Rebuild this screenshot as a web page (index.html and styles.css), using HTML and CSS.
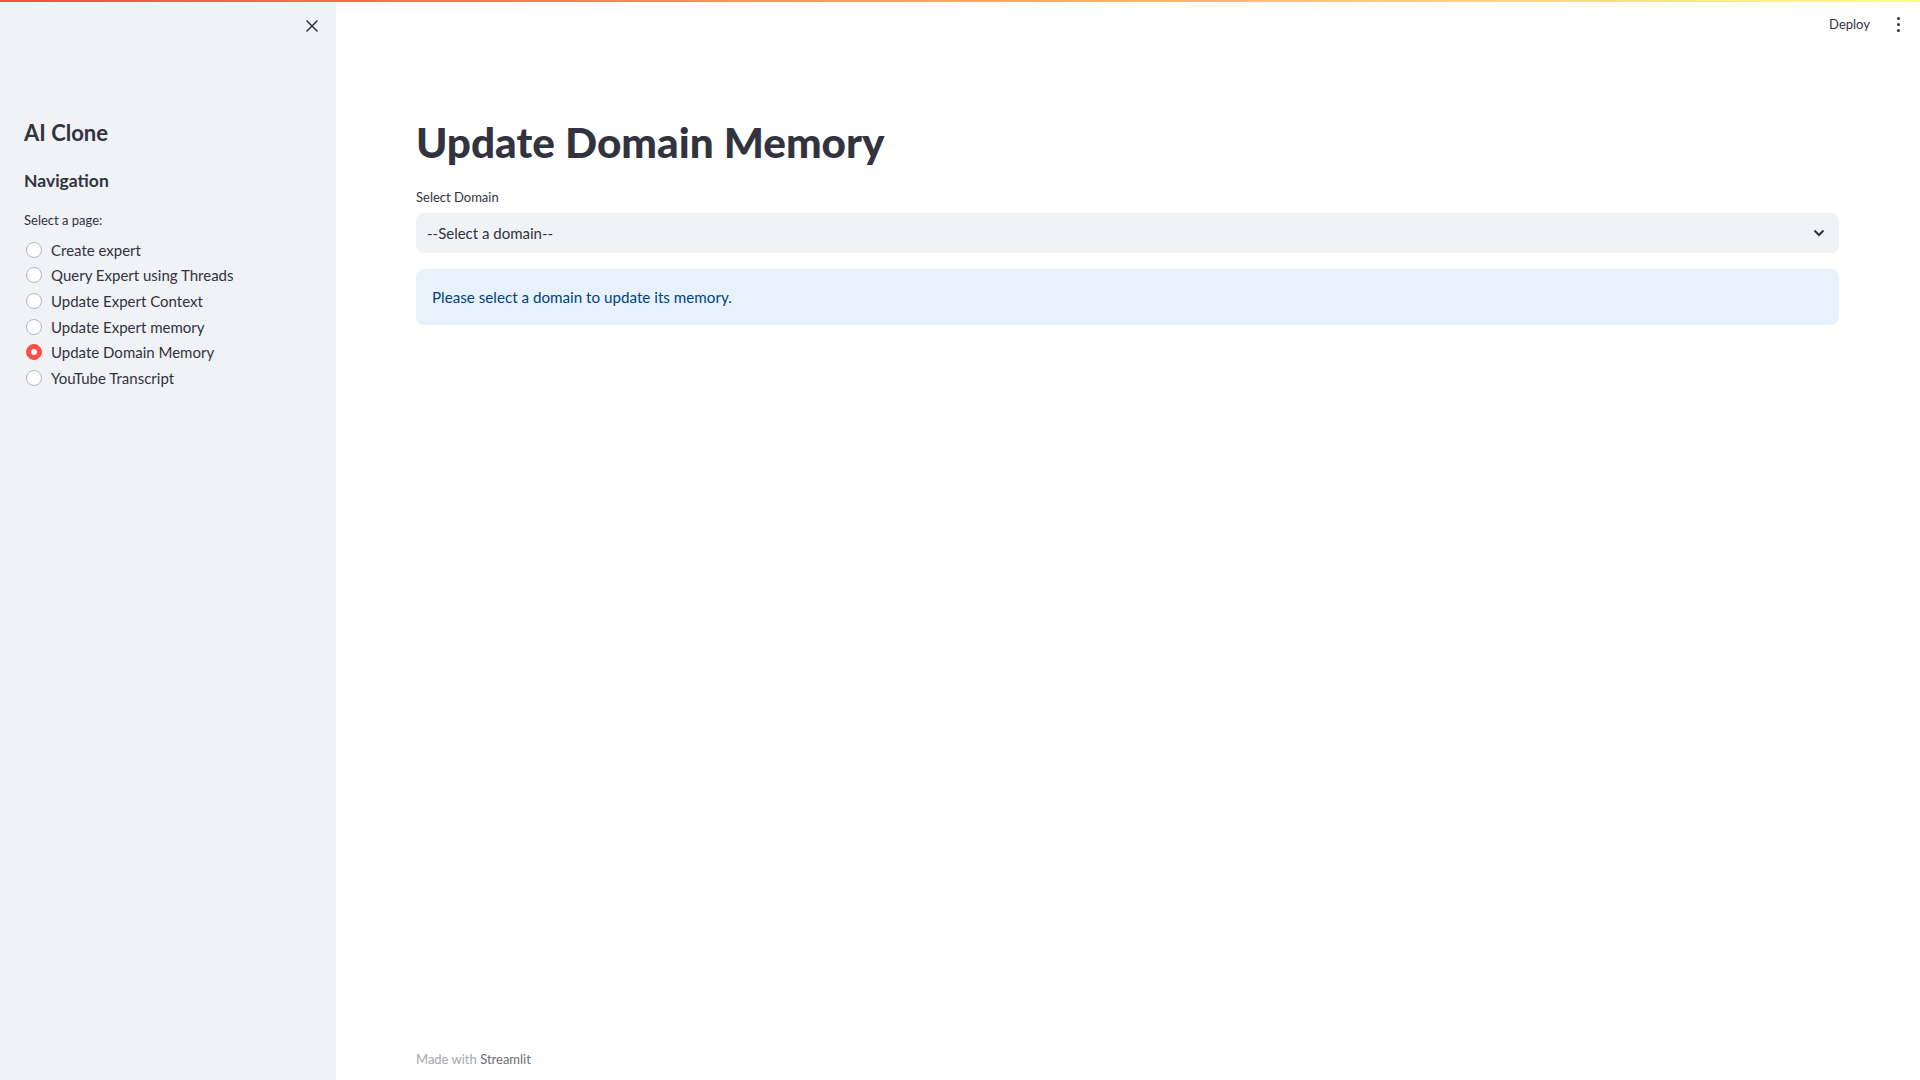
FILE: index.html
```html
<!DOCTYPE html>
<html lang="en">
<head>
<meta charset="utf-8">
<title>Update Domain Memory</title>
<link rel="stylesheet" href="styles.css">
</head>
<body>
<div class="decoration"></div>
<div class="app">
  <aside class="sidebar">
    <div class="sidebar-top">
      <button class="close-btn" aria-label="Close sidebar">
        <svg width="14" height="14" viewBox="0 0 14 14"><path d="M1.5 1.5 L12.5 12.5 M12.5 1.5 L1.5 12.5" stroke="#31333f" stroke-width="1.5" fill="none"/></svg>
      </button>
    </div>
    <h1 class="side-title">AI Clone</h1>
    <h2 class="side-sub">Navigation</h2>
    <div class="radio-label">Select a page:</div>
    <ul class="radio-list">
      <li class="radio-item"><span class="radio"></span><span>Create expert</span></li>
      <li class="radio-item"><span class="radio"></span><span>Query Expert using Threads</span></li>
      <li class="radio-item"><span class="radio"></span><span>Update Expert Context</span></li>
      <li class="radio-item"><span class="radio"></span><span>Update Expert memory</span></li>
      <li class="radio-item"><span class="radio checked"></span><span>Update Domain Memory</span></li>
      <li class="radio-item"><span class="radio"></span><span>YouTube Transcript</span></li>
    </ul>
  </aside>
  <main class="main">
    <header class="topbar">
      <span class="deploy">Deploy</span>
      <span class="menu" aria-label="Main menu"><i></i><i></i><i></i></span>
    </header>
    <h1 class="title">Update Domain Memory</h1>
    <div class="field-label">Select Domain</div>
    <div class="select">
      <span>--Select a domain--</span>
      <svg class="chev" width="12" height="8" viewBox="0 0 12 8"><path d="M1.5 1.5 L6 6 L10.5 1.5" stroke="#31333f" stroke-width="2" fill="none"/></svg>
    </div>
    <div class="info">Please select a domain to update its memory.</div>
    <footer class="footer">Made with <span class="brand">Streamlit</span></footer>
  </main>
</div>
</body>
</html>
```
FILE: styles.css
```css
* { box-sizing: border-box; }
html, body { margin: 0; padding: 0; height: 100%; }
body {
  font-family: "Lato", "Noto Sans", sans-serif;
  color: #31333f;
  background: #ffffff;
}
.decoration {
  position: absolute;
  top: 0; left: 0; right: 0;
  height: 2px;
  background: linear-gradient(90deg, #ff4b4b, #fffd80);
  z-index: 10;
}
.app { display: flex; height: 1080px; }
.sidebar {
  width: 336px;
  flex: none;
  background: #f0f2f6;
  padding: 0 24px;
}
.sidebar-top {
  height: 52px;
  display: flex;
  align-items: center;
  justify-content: flex-end;
  margin-right: -12px;
}
.close-btn {
  border: 0; background: none; padding: 0;
  width: 24px; height: 24px;
  display: flex; align-items: center; justify-content: center;
}
.side-title {
  margin: 67px 0 0;
  font-size: 22px;
  line-height: 28px;
  font-weight: 700;
}
.side-sub {
  margin: 22px 0 0;
  font-size: 17.5px;
  line-height: 24px;
  font-weight: 700;
}
.radio-label {
  margin-top: 17px;
  font-size: 13px;
  line-height: 20px;
}
.radio-list {
  list-style: none;
  margin: 7px 0 0;
  padding: 0;
}
.radio-item {
  height: 25.6px;
  display: flex;
  align-items: center;
  font-size: 15px;
}
.radio {
  width: 16px; height: 16px;
  border-radius: 50%;
  border: 1px solid #b4b7c0;
  background: #ffffff;
  margin: 0 9px 0 2px;
  flex: none;
  display: flex; align-items: center; justify-content: center;
}
.radio.checked {
  background: #ff4b4b;
  border-color: #ff4b4b;
}
.radio.checked::after {
  content: "";
  width: 6px; height: 6px;
  border-radius: 50%;
  background: #ffffff;
}
.main {
  flex: 1;
  display: flex;
  flex-direction: column;
  padding: 0 81px 0 80px;
}
.topbar {
  height: 48px;
  display: flex;
  align-items: center;
  justify-content: flex-end;
  margin-right: -81px;
  padding-right: 20px;
  gap: 24px;
}
.deploy { font-size: 13px; margin-right: 2px; }
.menu {
  display: flex; flex-direction: column; gap: 3px; align-items: center;
  width: 4px;
}
.menu i { width: 3px; height: 3px; border-radius: 50%; background: #31333f; display: block; }
.title {
  margin: 68px 0 0;
  font-size: 42.3px;
  line-height: 52px;
  font-weight: 900;
}
.field-label {
  margin-top: 19px;
  font-size: 13px;
  line-height: 20px;
}
.select {
  margin-top: 6px;
  height: 40px;
  border-radius: 8px;
  background: #f0f2f6;
  display: flex;
  align-items: center;
  justify-content: space-between;
  padding: 0 14px 0 11px;
  font-size: 15px;
}
.info {
  margin-top: 16px;
  border-radius: 8px;
  background: #e8f2fc;
  color: #004280;
  padding: 16px;
  height: 56px;
  font-size: 15.2px;
  line-height: 24px;
}
.footer {
  margin-top: auto;
  margin-bottom: 11px;
  font-size: 13px;
  line-height: 20px;
  color: #a5a6ac;
}
.brand { color: #6b6d76; }
```
